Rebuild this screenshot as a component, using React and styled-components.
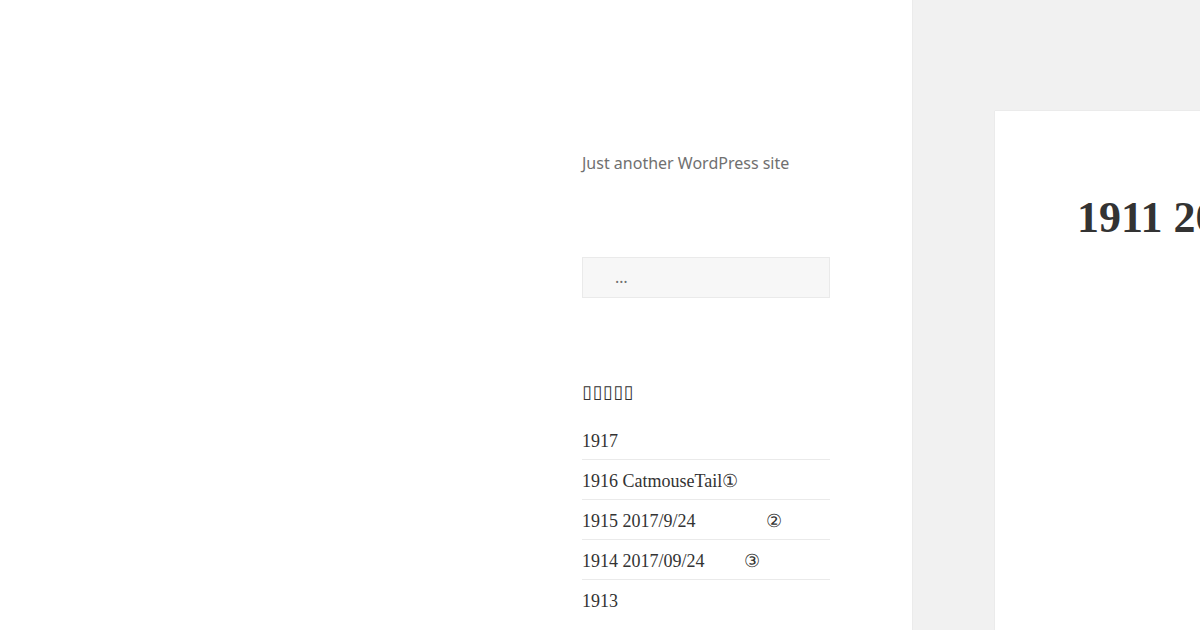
import React from 'react';
import styled, { createGlobalStyle } from 'styled-components';

const GlobalStyle = createGlobalStyle`
	html, body {
		margin: 0;
		padding: 0;
		background: #f1f1f1;
		overflow: hidden;
	}
`;

const Page = styled.div`
	display: flex;
	width: 1200px;
	height: 630px;
	overflow: hidden;
`;

const Sidebar = styled.aside`
	flex: 0 0 912px;
	height: 630px;
	background: #fff;
	box-shadow: 0 0 1px rgba(0, 0, 0, 0.15);
	padding: 151px 82px 0 582px;
	box-sizing: border-box;
`;

const Description = styled.p`
	margin: 0;
	font-family: 'Noto Sans', sans-serif;
	font-size: 16px;
	line-height: 24px;
	color: #707070;
`;

const SearchField = styled.div`
	margin-top: 82px;
	height: 41px;
	box-sizing: border-box;
	background: #f7f7f7;
	border: 1px solid #eaeaea;
	padding-left: 32px;
	font-family: 'Noto Sans', sans-serif;
	font-size: 16px;
	line-height: 39px;
	letter-spacing: 1px;
	color: #707070;
`;

const WidgetTitle = styled.h2`
	margin: 84px 0 18px;
	height: 20px;
	font-family: 'DejaVu Sans', sans-serif;
	font-size: 18px;
	font-weight: normal;
	line-height: 20px;
	letter-spacing: 0.5px;
	color: #333;
`;

const PostList = styled.ul`
	list-style: none;
	margin: 0;
	padding: 0;
`;

const PostItem = styled.li`
	padding: 9px 0 6px;
	font-family: 'Liberation Serif', serif;
	font-size: 18px;
	line-height: 24px;
	color: #333;
	white-space: nowrap;

	& + & {
		border-top: 1px solid #eaeaea;
	}
`;

const Gap = styled.span`
	display: inline-block;
	width: ${({ w }) => w}px;
`;

const Main = styled.main`
	flex: 1 0 auto;
	margin: 111px 0 0 83px;
	background: #fff;
	box-shadow: 0 0 1px rgba(0, 0, 0, 0.15);
	padding: 81px 0 0 82px;
	white-space: nowrap;
`;

const EntryTitle = styled.h1`
	margin: 0;
	font-family: 'Liberation Serif', serif;
	font-size: 44px;
	font-weight: bold;
	line-height: 52.8px;
	color: #333;
`;

const App = () => {
	return (
		<>
			<GlobalStyle />
			<Page>
				<Sidebar>
					<Description>Just another WordPress site</Description>
					<SearchField>…</SearchField>
					<WidgetTitle>▯▯▯▯▯</WidgetTitle>
					<PostList>
						<PostItem>1917</PostItem>
						<PostItem>1916 CatmouseTail①</PostItem>
						<PostItem>
							1915 2017/9/24<Gap w={70} />②
						</PostItem>
						<PostItem>
							1914 2017/09/24<Gap w={39} />③
						</PostItem>
						<PostItem>1913</PostItem>
					</PostList>
				</Sidebar>
				<Main>
					<EntryTitle>1911 2017/09/23</EntryTitle>
				</Main>
			</Page>
		</>
	);
};

export default App;
